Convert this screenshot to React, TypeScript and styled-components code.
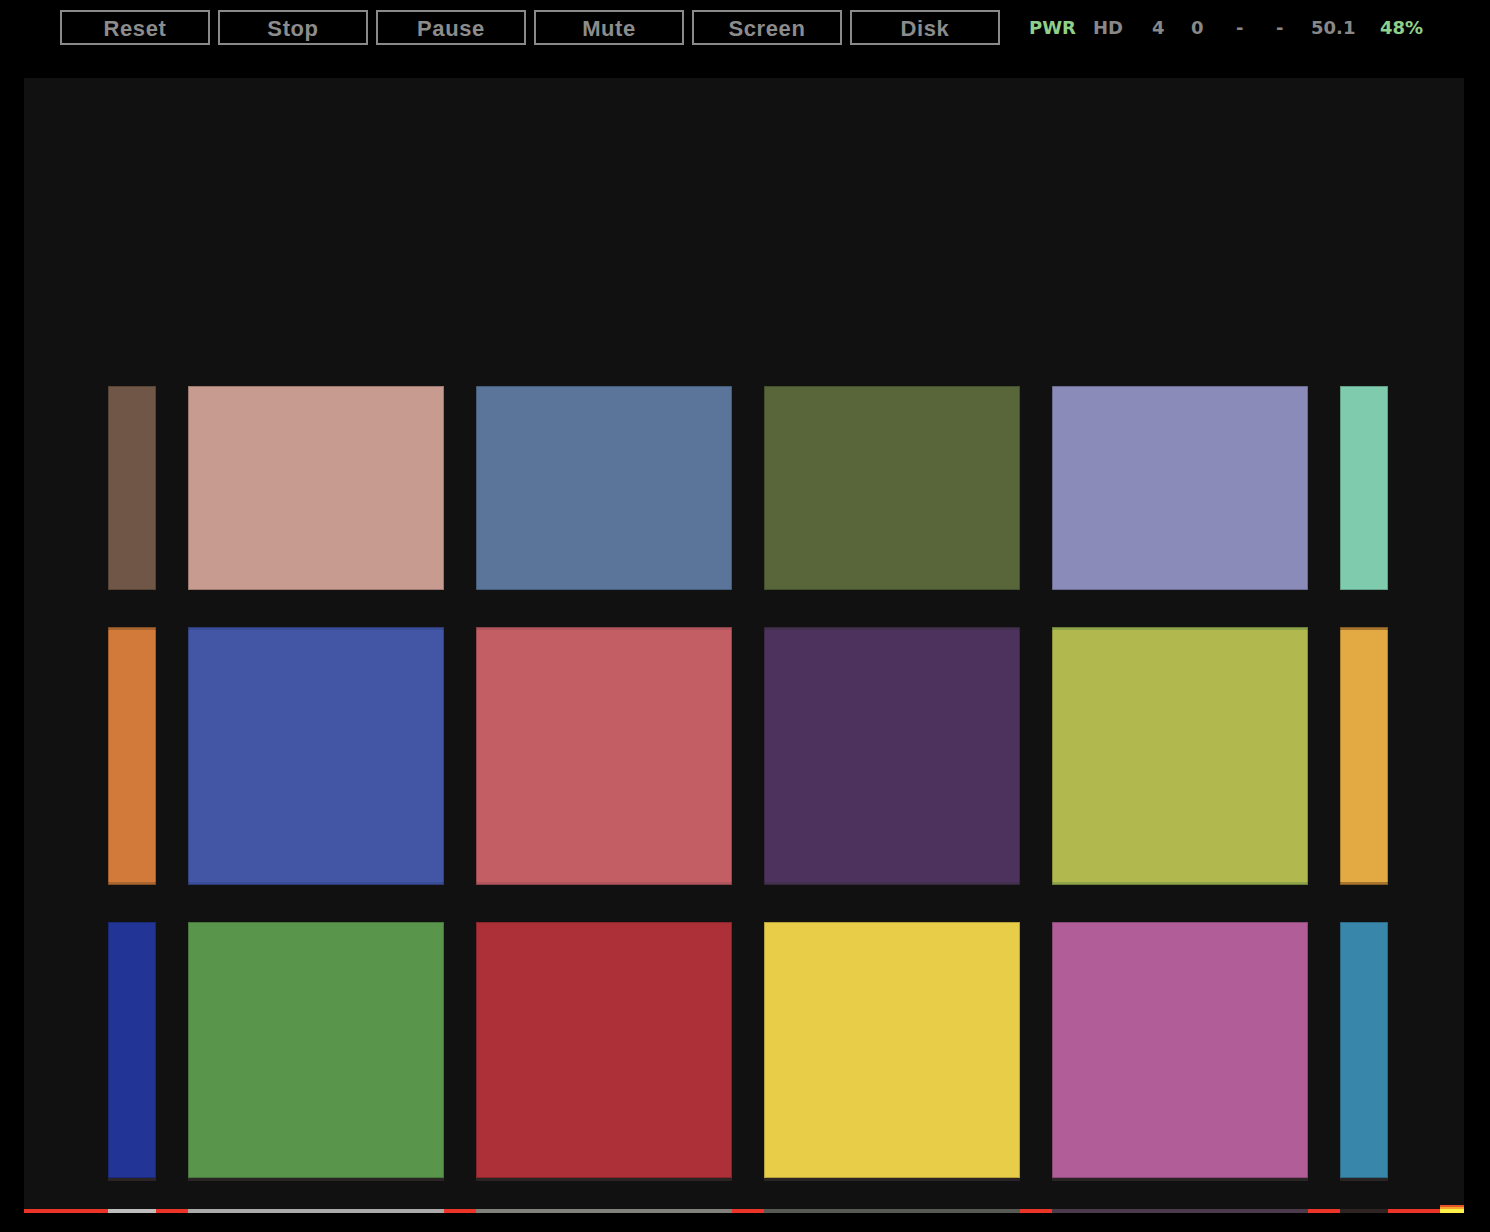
import styled, { createGlobalStyle } from 'styled-components';

const GlobalStyle = createGlobalStyle`
  html, body {
    margin: 0;
    padding: 0;
    background: #000;
  }
`;

const buttons = ['Reset', 'Stop', 'Pause', 'Mute', 'Screen', 'Disk'];

const status: { label: string; on?: boolean }[] = [
  { label: 'PWR', on: true },
  { label: 'HD' },
  { label: '4' },
  { label: '0' },
  { label: '-' },
  { label: '-' },
  { label: '50.1' },
  { label: '48%', on: true },
];

type TileSpec = { color: string; edge?: string };

const rows: { height: number; band?: boolean; drop?: boolean; tiles: TileSpec[] }[] = [
  {
    height: 204,
    tiles: [
      { color: '#6f5646' },
      { color: '#c79b8f' },
      { color: '#5a7599' },
      { color: '#58663a' },
      { color: '#8a8bb8' },
      { color: '#7fcbae' },
    ],
  },
  {
    height: 258,
    band: true,
    tiles: [
      { color: '#d27a3a', edge: '#a8652e' },
      { color: '#4356a6', edge: '#394c96' },
      { color: '#c35e65', edge: '#b0555b' },
      { color: '#4d325e', edge: '#44304f' },
      { color: '#b1b84e', edge: '#8ea347' },
      { color: '#e3a943', edge: '#a8752e' },
    ],
  },
  {
    height: 256,
    drop: true,
    tiles: [
      { color: '#223597' },
      { color: '#59964b' },
      { color: '#ad2f38' },
      { color: '#e8cd49' },
      { color: '#b05d98' },
      { color: '#3887ab' },
    ],
  },
];

const strip: { w: number; color: string }[] = [
  { w: 84, color: '#ec3426' },
  { w: 48, color: '#bdbdbd' },
  { w: 32, color: '#ec3426' },
  { w: 256, color: '#aaaaaa' },
  { w: 32, color: '#ec3426' },
  { w: 256, color: '#80817b' },
  { w: 32, color: '#ec3426' },
  { w: 256, color: '#575954' },
  { w: 32, color: '#ec3426' },
  { w: 256, color: '#4a3a4c' },
  { w: 32, color: '#ec3426' },
  { w: 48, color: '#2f2424' },
  { w: 52, color: '#ec3426' },
];

export default function App() {
  return (
    <>
      <GlobalStyle />
      <Page>
        <Toolbar>
          <Buttons>
            {buttons.map((b) => (
              <Button key={b}>{b}</Button>
            ))}
          </Buttons>
          <Status>
            {status.map((s, i) => (
              <StatusItem key={i} $on={s.on}>
                {s.label}
              </StatusItem>
            ))}
          </Status>
        </Toolbar>

        <Screen>
          <Grid>
            {rows.map((row, r) => (
              <Row key={r} $h={row.height}>
                {row.tiles.map((t, i) => (
                  <Tile key={i} $color={t.color} $edge={t.edge} $band={row.band} $drop={row.drop} />
                ))}
              </Row>
            ))}
          </Grid>
          <Strip>
            {strip.map((s, i) => (
              <Segment key={i} $w={s.w} $color={s.color} />
            ))}
            <Flag />
          </Strip>
        </Screen>
      </Page>
    </>
  );
}

const Page = styled.div`
  width: 1490px;
  height: 1232px;
  background: #000;
  overflow: hidden;
`;

const Toolbar = styled.div`
  display: flex;
  align-items: center;
  height: 35px;
  padding: 10px 0 0 60px;
`;

const Buttons = styled.div`
  display: flex;
  gap: 8px;
`;

const Button = styled.button`
  box-sizing: border-box;
  width: 150px;
  height: 35px;
  margin: 0;
  padding: 2px 0 0;
  background: #000;
  border: 2px solid #8a8a8a;
  color: #8c8c8c;
  font-family: 'Liberation Sans', Arial, sans-serif;
  font-weight: bold;
  font-size: 22px;
  letter-spacing: 0.6px;
  line-height: 29px;
  cursor: pointer;
`;

const Status = styled.div`
  display: grid;
  grid-template-columns: 64px 59px 39px 45px 40px 35px 69px auto;
  margin-left: 29px;
`;

const StatusItem = styled.span<{ $on?: boolean }>`
  font-family: 'DejaVu Sans', Verdana, sans-serif;
  font-weight: bold;
  font-size: 18px;
  color: ${({ $on }) => ($on ? '#8fcf8a' : '#888888')};
`;

const Screen = styled.div`
  box-sizing: border-box;
  width: 1440px;
  height: 1135px;
  margin: 33px 0 0 24px;
  background: #111111;
  display: flex;
  flex-direction: column;
`;

const Grid = styled.div`
  display: flex;
  flex-direction: column;
  gap: 37px;
  padding: 308px 0 0 84px;
  flex: 1;
`;

const Row = styled.div<{ $h: number }>`
  display: grid;
  grid-template-columns: 48px repeat(4, 256px) 48px;
  column-gap: 32px;
  height: ${({ $h }) => $h}px;
`;

const Tile = styled.div<{ $color: string; $edge?: string; $band?: boolean; $drop?: boolean }>`
  background: ${({ $color }) => $color};
  box-shadow: ${({ $edge, $band, $drop }) =>
    [
      'inset 0 0 0 1px rgba(0, 0, 0, 0.22)',
      $band && $edge ? `inset 0 3px 0 ${$edge}, inset 0 -3px 0 ${$edge}` : null,
      $drop ? '0 3px 0 #2b2424' : null,
    ]
      .filter(Boolean)
      .join(', ')};
`;

const Strip = styled.div`
  display: flex;
  align-items: flex-end;
  height: 8px;
`;

const Segment = styled.div<{ $w: number; $color: string }>`
  width: ${({ $w }) => $w}px;
  height: 4px;
  background: ${({ $color }) => $color};
`;

const Flag = styled.div`
  width: 24px;
  height: 8px;
  background: linear-gradient(#e8542a 0 25%, #f7a52a 25% 50%, #fdf04a 50% 100%);
`;
